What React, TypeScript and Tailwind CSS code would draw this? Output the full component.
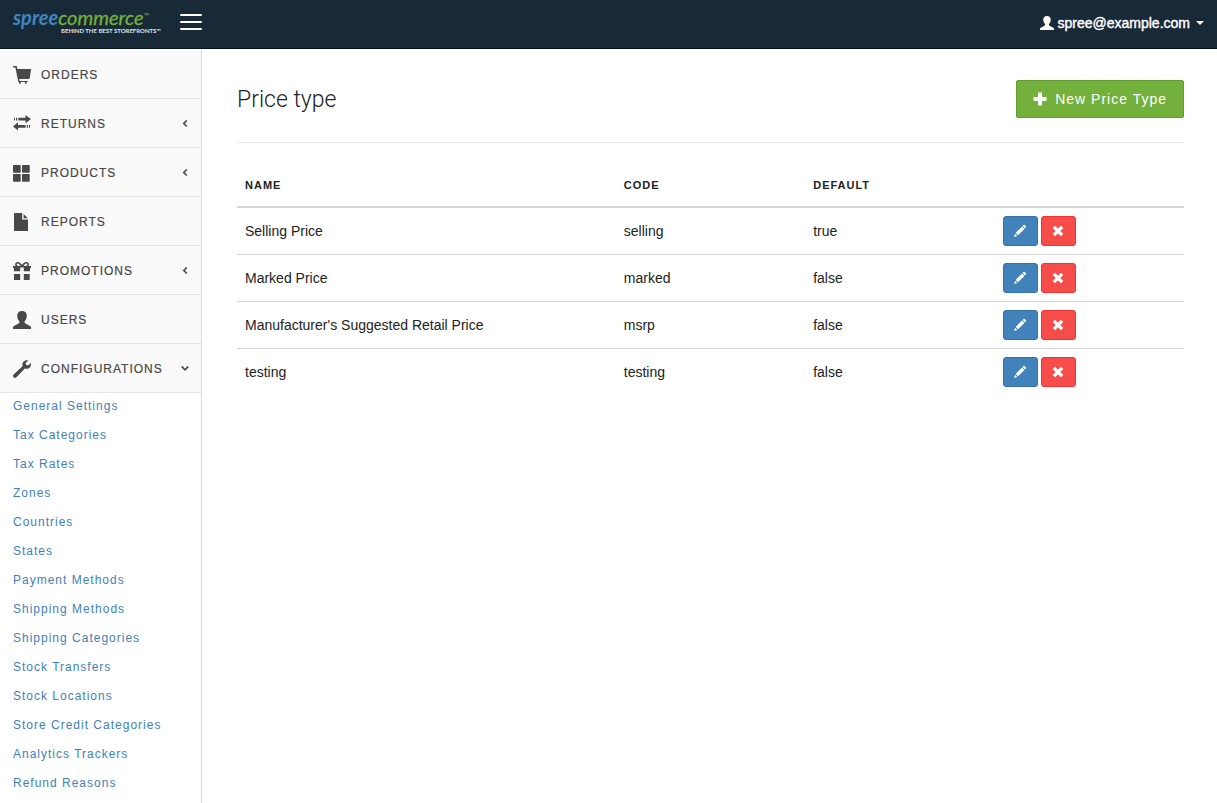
import type { ReactNode } from "react";

type IconProps = { className?: string };

function Glyph({ className = "size-[18px]", children }: IconProps & { children: ReactNode }) {
  return (
    <svg viewBox="0 0 18 18" className={`shrink-0 ${className}`} fill="currentColor" aria-hidden="true">
      {children}
    </svg>
  );
}

const CartIcon = () => (
  <Glyph>
    <path d="M.5 0h2.600c.4 0 .7.200.8.600L4.400 3H17.500c.4 0 .6.300.5.700l-1.300 8.500c-.1.500-.4.800-.9.800H6.200l.4 1.900h8v1.200h-1.200l.3 1c0 1.200-1.900 1.200-1.900 0l.2-1H7.700l.2 1c0 1.200-1.900 1.200-1.900 0l.2-1H5.300L2.400 1.500H.5a.7.7 0 0 1 0-1.500z" />
  </Glyph>
);

const TransferIcon = () => (
  <Glyph>
    <path d="M1 2.700h1v2.800H1zM3 2.700h1.200v2.800H3zM5.400 2.700H12.500V0L18 4.100l-5.500 4.100V5.500H5.400zM17 10h-1v2.800h1zM15 10h-1.200v2.800H15zM12.600 10H5V7.300L0 11.400l5 4.100V12.800h7.600z" />
  </Glyph>
);

const GridIcon = () => (
  <Glyph>
    <rect x="0" y="1" width="7.700" height="7.700" rx=".7" />
    <rect x="9" y="1" width="7.700" height="7.700" rx=".7" />
    <rect x="0" y="10" width="7.700" height="7.700" rx=".7" />
    <rect x="9" y="10" width="7.700" height="7.700" rx=".7" />
  </Glyph>
);

const FileIcon = () => (
  <Glyph>
    <path d="M1.600 0h7.600v6.600h5.800v10.800c0 .4-.2.6-.6.6H1.600c-.4 0-.6-.2-.6-.6V.6c0-.4.2-.6.6-.6zM10.600 1l4.200 4.200h-4.200z" />
  </Glyph>
);

const GiftIcon = () => (
  <Glyph>
    <path
      fillRule="evenodd"
      d="M4.500 0C6.500 0 8 1.400 9 3c1-1.600 2.500-3 4.500-3 1.700 0 2.800 1.500 2.200 3.200L15.300 4H18v2h-1v3.200h-6.200V5.500H7.200v3.700H1V6H0V4h2.700l-.4-.8C1.700 1.500 2.800 0 4.500 0zm0 1.400C3.600 1.500 3.400 2.400 4 3l1 1h2.500C6.700 2.700 5.500 1.300 4.500 1.400zm9 0c-1-.1-2.200 1.300-3 2.600H13l1-1c.6-.6.400-1.500-.5-1.600zM1 12h6.200v6H1.600c-.4 0-.6-.2-.6-.6zM10.800 12h5.900v5.400c0 .4-.2.6-.6.600h-5.300z"
    />
  </Glyph>
);

const UserIcon = ({ className }: IconProps) => (
  <Glyph className={className}>
    <path d="M9 0c2.900 0 4.800 1.700 4.800 4.600 0 2.400-.8 4.500-2.200 5.700v1.300c0 .5.300.8.800 1l4.600 2.400c.7.300 1 .8 1 1.500V18H0v-1.500c0-.7.300-1.200 1-1.500l4.600-2.400c.5-.2.800-.5.800-1v-1.300C5 9.100 4.200 7 4.200 4.600 4.200 1.700 6.100 0 9 0z" />
  </Glyph>
);

const WrenchIcon = () => (
  <Glyph>
    <path d="M15.200.4 12.600 3l.5 2 2 .5L17.700 3c.7 2-.1 4.200-1.900 5.200-1.300.7-2.700.7-3.900.2l-8.500 8.900c-.8.800-1.900.8-2.700 0s-.8-1.900 0-2.700l9-8.500c-.5-1.300-.4-2.800.5-4.100C11.500.5 13.400-.200 15.200.4z" />
  </Glyph>
);

const PencilIcon = () => (
  <svg viewBox="0 0 14 14" className="size-[14px]" fill="currentColor" aria-hidden="true">
    <path d="M10.500 1.100c.4-.4.900-.4 1.300 0l1.100 1.100c.4.4.4.900 0 1.300l-.9.900-2.400-2.400zM9 2.600 11.400 5l-6.300 6.300-2.400-2.400zM2.100 9.700l2.200 2.200-3.300 1.100z" />
  </svg>
);

const RemoveIcon = () => (
  <svg viewBox="0 0 12 12" className="size-3" fill="none" stroke="currentColor" strokeWidth="3.400" aria-hidden="true">
    <path d="M1.900 1.900 10.100 10.100M10.100 1.900 1.900 10.100" />
  </svg>
);

const PlusIcon = () => (
  <svg viewBox="0 0 14 14" className="size-[14px]" fill="currentColor" aria-hidden="true">
    <path d="M5 .5h4V5h4.500v4H9v4.500H5V9H.5V5H5z" />
  </svg>
);

const Chevron = ({ open }: { open?: boolean }) => (
  <svg
    viewBox="0 0 8 8"
    className="ml-auto size-2 shrink-0"
    fill="none"
    stroke="currentColor"
    strokeWidth="1.700"
    aria-hidden="true"
  >
    {open ? <path d="M.8 1.700 4 4.900l3.200-3.200" /> : <path d="M5.800.5 2.800 3.500l3 3" />}
  </svg>
);

const Logo = () => (
  <svg viewBox="0 0 160 40" className="h-10 w-40" role="img" aria-label="Spree Commerce">
    <g fontFamily="Lato, sans-serif">
      <text x="1" y="23" fontSize="20" fontStyle="italic" fill="#3f86c1">
        <tspan fontWeight="700">spree</tspan>
        <tspan fill="#73b03c" stroke="#73b03c" strokeWidth=".3">commerce</tspan>
        <tspan fill="#73b03c" fontSize="8" dy="-6">™</tspan>
      </text>
      <text x="49" y="31" fontSize="6" fontWeight="700" fill="#dfe5ea">BEHIND THE BEST STOREFRONTS™</text>
    </g>
  </svg>
);

const menu = [
  { label: "Orders", icon: <CartIcon /> },
  { label: "Returns", icon: <TransferIcon />, sub: true },
  { label: "Products", icon: <GridIcon />, sub: true },
  { label: "Reports", icon: <FileIcon /> },
  { label: "Promotions", icon: <GiftIcon />, sub: true },
  { label: "Users", icon: <UserIcon /> },
  { label: "Configurations", icon: <WrenchIcon />, sub: true, open: true },
];

const settings = [
  "General Settings",
  "Tax Categories",
  "Tax Rates",
  "Zones",
  "Countries",
  "States",
  "Payment Methods",
  "Shipping Methods",
  "Shipping Categories",
  "Stock Transfers",
  "Stock Locations",
  "Store Credit Categories",
  "Analytics Trackers",
  "Refund Reasons",
];

const priceTypes = [
  { name: "Selling Price", code: "selling", isDefault: true },
  { name: "Marked Price", code: "marked", isDefault: false },
  { name: "Manufacturer's Suggested Retail Price", code: "msrp", isDefault: false },
  { name: "testing", code: "testing", isDefault: false },
];

export default function App() {
  return (
    <div className="flex h-screen flex-col overflow-hidden bg-white font-['Liberation_Sans',Arial,sans-serif] text-sm text-[#222]">
      <header className="flex h-[49px] shrink-0 items-center border-b border-[#08121b] bg-[#182a38] pr-[13px] pl-3 text-white">
        <a href="#home" className="pb-1">
          <Logo />
        </a>
        <button type="button" aria-label="Toggle menu" className="ml-2 flex w-[22px] flex-col gap-[5px] pb-1">
          <span className="h-0.5 w-full rounded-[1px] bg-white" />
          <span className="h-0.5 w-full rounded-[1px] bg-white" />
          <span className="h-0.5 w-full rounded-[1px] bg-white" />
        </button>
        <button type="button" className="ml-auto flex items-center pb-0.5 [-webkit-text-stroke:0.4px]">
          <UserIcon className="mr-1 size-[14px]" />
          <span>spree@example.com</span>
          <span className="ml-1.5 border-x-4 border-t-4 border-x-transparent border-t-white" />
        </button>
      </header>

      <div className="flex min-h-0 flex-1">
        <aside className="mt-px w-[202px] shrink-0 overflow-hidden border-r border-[#d9d9d9]">
          <nav>
            <ul>
              {menu.map((item) => (
                <li key={item.label}>
                  <a
                    href={`#${item.label.toLowerCase()}`}
                    className="flex h-[49px] items-center gap-2.5 border-b border-[#e5e5e5] bg-[#fafafa] pt-0.5 pr-3 pl-[13px] text-xs tracking-[1px] text-[#484848] uppercase [-webkit-text-stroke:0.2px]"
                  >
                    {item.icon}
                    <span>{item.label}</span>
                    {item.sub && <Chevron open={item.open} />}
                  </a>
                </li>
              ))}
            </ul>
            <ul className="text-xs tracking-[1px] text-[#3f81b8]">
              {settings.map((label) => (
                <li key={label} className="px-[13px] pt-[3px] pb-1.5 leading-5">
                  <a href="#settings">{label}</a>
                </li>
              ))}
            </ul>
          </nav>
        </aside>

        <main className="min-w-0 flex-1 pt-[31px] pr-[33px] pl-[35px]">
          <div className="flex items-start justify-between border-b border-[#e8e8e8] pb-6">
            <h1 className="pt-0.5 font-[Roboto,sans-serif] text-[23px] leading-9 font-light">Price type</h1>
            <button
              type="button"
              className="flex h-[38px] items-center gap-2 rounded-[2px] border border-[#639b33] bg-[#73b03c] px-4 tracking-[1px] text-white"
            >
              <PlusIcon />
              <span>New Price Type</span>
            </button>
          </div>

          <table className="mt-5 w-full table-fixed border-collapse text-left">
            <thead>
              <tr className="border-b-2 border-[#d5d5d5] text-[11px] tracking-[1px] uppercase">
                <th className="h-[44px] w-2/5 px-2 pt-0.5">Name</th>
                <th className="w-1/5 px-2 pt-0.5">Code</th>
                <th className="w-1/5 px-2 pt-0.5">Default</th>
                <th className="w-1/5 px-2" aria-label="Actions" />
              </tr>
            </thead>
            <tbody>
              {priceTypes.map((row) => (
                <tr key={row.name} className="border-b border-[#d5d5d5] last:border-b-0">
                  <td className="px-2">{row.name}</td>
                  <td className="px-2">{row.code}</td>
                  <td className="px-2">{String(row.isDefault)}</td>
                  <td className="p-2">
                    <div className="flex gap-[3px] text-white">
                      <button
                        type="button"
                        aria-label={`Edit ${row.name}`}
                        className="flex h-[30px] w-[35px] items-center justify-center rounded-[3px] border border-[#3573a5] bg-[#4182bb]"
                      >
                        <PencilIcon />
                      </button>
                      <button
                        type="button"
                        aria-label={`Delete ${row.name}`}
                        className="flex h-[30px] w-[35px] items-center justify-center rounded-[3px] border border-[#f03434] bg-[#f64c4a]"
                      >
                        <RemoveIcon />
                      </button>
                    </div>
                  </td>
                </tr>
              ))}
            </tbody>
          </table>
        </main>
      </div>
    </div>
  );
}
